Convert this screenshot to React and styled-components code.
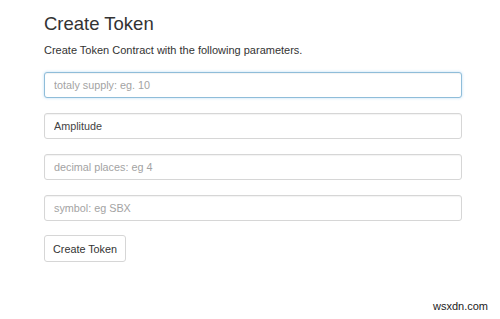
import styled, { createGlobalStyle } from "styled-components";

const Global = createGlobalStyle`
  html, body {
    margin: 0;
    padding: 0;
    background: #fff;
    font-family: "Liberation Sans", Arial, sans-serif;
  }
`;

const Page = styled.div`
  width: 500px;
  height: 319px;
  box-sizing: border-box;
  padding: 12px 38px 0 44px;
  display: flex;
  flex-direction: column;
  position: relative;
`;

const Title = styled.h1`
  margin: 0;
  font-size: 18.5px;
  font-weight: 400;
  color: #333;
  line-height: 24px;
`;

const Lead = styled.p`
  margin: 7px 0 0;
  font-size: 11px;
  color: #333;
  line-height: 14px;
`;

const Form = styled.form`
  margin-top: 15px;
  display: flex;
  flex-direction: column;
  gap: 15px;
  align-items: flex-start;
`;

const Field = styled.input`
  width: 418px;
  height: 26px;
  box-sizing: border-box;
  padding: 0 9px;
  font-family: inherit;
  font-size: 10.8px;
  color: #444;
  background: #fff;
  border: 1px solid ${(p) => (p.$focused ? "#8fbdd9" : "#d6d6d6")};
  border-radius: 3px;
  box-shadow: ${(p) =>
    p.$focused
      ? "inset 0 1px 1px rgba(0,0,0,.05), 0 0 3px rgba(102,175,233,.45)"
      : "inset 0 1px 1px rgba(0,0,0,.05)"};
  outline: none;

  &::placeholder {
    color: #a3a3a3;
  }
`;

const Button = styled.button`
  height: 27px;
  padding: 0 8px;
  font-family: inherit;
  font-size: 10.8px;
  color: #333;
  background: #fff;
  border: 1px solid #d6d6d6;
  border-radius: 3px;
  margin-top: -1px;
`;

const Mark = styled.span`
  position: absolute;
  right: 12px;
  bottom: 7px;
  font-size: 11px;
  color: #222;
`;

export default function App() {
  return (
    <>
      <Global />
      <Page>
        <Title>Create Token</Title>
        <Lead>Create Token Contract with the following parameters.</Lead>
        <Form onSubmit={(e) => e.preventDefault()}>
          <Field $focused placeholder="totaly supply: eg. 10" />
          <Field defaultValue="Amplitude" />
          <Field placeholder="decimal places: eg 4" />
          <Field placeholder="symbol: eg SBX" />
          <Button type="submit">Create Token</Button>
        </Form>
        <Mark>wsxdn.com</Mark>
      </Page>
    </>
  );
}
